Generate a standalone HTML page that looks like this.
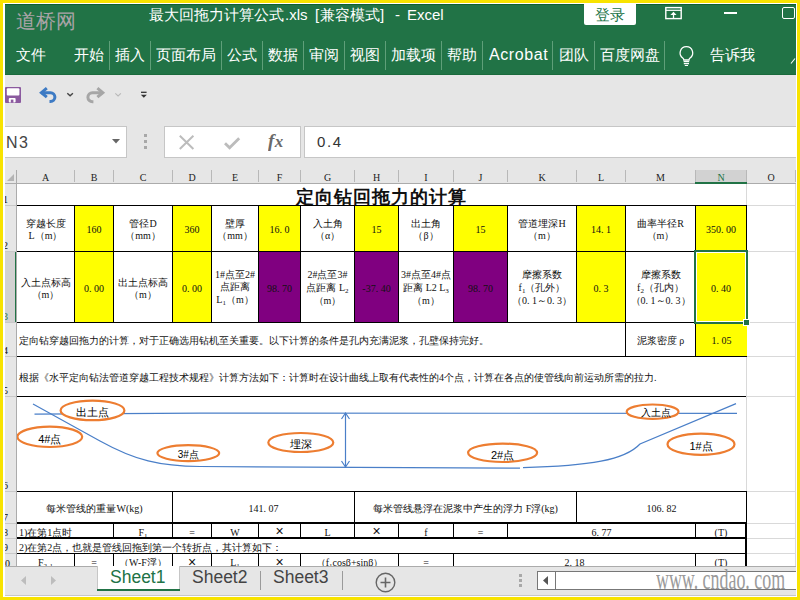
<!DOCTYPE html>
<html><head><meta charset="utf-8"><style>*{margin:0;padding:0}
html,body{width:800px;height:600px;overflow:hidden;background:#f8e300;position:relative}
div{position:absolute;overflow:hidden;white-space:nowrap}
.k{font-family:Liberation Sans,sans-serif;-webkit-text-stroke:0.4px currentColor}
.in{display:block}
.ln{display:block}
.sb{padding:1px 0 1px}
.p{padding-right:2.5px}
.x{font:14px/10px Liberation Sans,sans-serif}
sub{font-size:7px;vertical-align:-2px;line-height:0}
b{font-weight:bold}
body.cjk .k{font-size:inherit!important;letter-spacing:0!important;padding-left:0!important;margin-right:0!important;-webkit-text-stroke-width:0!important}
body.cjk b .k{font-size:18px!important;letter-spacing:1px!important}
</style></head><body>
<div style="left:3px;top:3px;width:794px;height:594px;background:#fff"></div>
<div style="left:5px;top:4px;width:791px;height:71px;background:#217346;"></div>
<div style="left:5px;top:4px;width:791px;height:1px;background:#0f5f33;"></div>
<div style="left:5px;top:74px;width:791px;height:1px;background:#1a6a3c;"></div>
<div style="left:16px;top:9px;width:60px;height:24px;color:#a9a3a6;font:20px/24px Liberation Sans,sans-serif;"><span class="k" style="font-size:24px;letter-spacing:1px;padding-left:0.5px;margin-right:-0.5px;-webkit-text-stroke-width:0.53px">道桥网</span></div>
<div style="left:149px;top:5px;width:150px;height:20px;color:#fff;font:15px/20px Liberation Sans,sans-serif;white-space:pre;"><span class="k" style="font-size:18px;letter-spacing:1px;padding-left:0.5px;margin-right:-0.5px;-webkit-text-stroke-width:0.4px">最大回拖力计算公式</span></div>
<div style="left:285px;top:5px;width:150px;height:20px;color:#fff;font:15px/20px Liberation Sans,sans-serif;white-space:pre;">.xls</div>
<div style="left:315px;top:5px;width:150px;height:20px;color:#fff;font:15px/20px Liberation Sans,sans-serif;white-space:pre;">[</div>
<div style="left:320px;top:5px;width:150px;height:20px;color:#fff;font:15px/20px Liberation Sans,sans-serif;white-space:pre;"><span class="k" style="font-size:18px;letter-spacing:1px;padding-left:0.5px;margin-right:-0.5px;-webkit-text-stroke-width:0.4px">兼容模式</span></div>
<div style="left:380px;top:5px;width:150px;height:20px;color:#fff;font:15px/20px Liberation Sans,sans-serif;white-space:pre;">]</div>
<div style="left:395px;top:5px;width:150px;height:20px;color:#fff;font:15px/20px Liberation Sans,sans-serif;white-space:pre;">-</div>
<div style="left:407px;top:5px;width:150px;height:20px;color:#fff;font:15px/20px Liberation Sans,sans-serif;white-space:pre;">Excel</div>
<div style="left:584px;top:4px;width:52px;height:21px;background:#fff;color:#217346;font:15px/21px Liberation Sans,sans-serif;text-align:center;border-radius:0 0 2px 2px;"><span class="k" style="font-size:18px;letter-spacing:1px;padding-left:0.5px;margin-right:-0.5px;-webkit-text-stroke-width:0.4px">登录</span></div>
<svg style="position:absolute;left:660px;top:0px" width="30" height="25" viewBox="660 0 30 25"><rect x="665.8" y="7.6" width="15.4" height="11" stroke="#fff" stroke-width="1.4" fill="none"/><path d="M665.8 10.3h15.4" stroke="#fff" stroke-width="1.2"/><path d="M673.5 18.2V13.5" stroke="#fff" stroke-width="1.3"/><path d="M670.4 15L673.5 11.8 676.6 15z" fill="#fff"/></svg>
<div style="left:724px;top:12px;width:13px;height:1.5px;background:#fff;"></div>
<div style="left:782px;top:7px;width:13px;height:12px;border:1.5px solid #fff;box-sizing:border-box;border-radius:2px;"></div>
<div style="left:16px;top:45px;width:120px;height:20px;color:#fff;font:15px/20px Liberation Sans,sans-serif;white-space:pre;"><span class="k" style="font-size:18px;letter-spacing:1px;padding-left:0.5px;margin-right:-0.5px;-webkit-text-stroke-width:0.4px">文件</span></div>
<div style="left:74px;top:45px;width:120px;height:20px;color:#fff;font:15px/20px Liberation Sans,sans-serif;white-space:pre;"><span class="k" style="font-size:18px;letter-spacing:1px;padding-left:0.5px;margin-right:-0.5px;-webkit-text-stroke-width:0.4px">开始</span></div>
<div style="left:115px;top:45px;width:120px;height:20px;color:#fff;font:15px/20px Liberation Sans,sans-serif;white-space:pre;"><span class="k" style="font-size:18px;letter-spacing:1px;padding-left:0.5px;margin-right:-0.5px;-webkit-text-stroke-width:0.4px">插入</span></div>
<div style="left:156px;top:45px;width:120px;height:20px;color:#fff;font:15px/20px Liberation Sans,sans-serif;white-space:pre;"><span class="k" style="font-size:18px;letter-spacing:1px;padding-left:0.5px;margin-right:-0.5px;-webkit-text-stroke-width:0.4px">页面布局</span></div>
<div style="left:227px;top:45px;width:120px;height:20px;color:#fff;font:15px/20px Liberation Sans,sans-serif;white-space:pre;"><span class="k" style="font-size:18px;letter-spacing:1px;padding-left:0.5px;margin-right:-0.5px;-webkit-text-stroke-width:0.4px">公式</span></div>
<div style="left:268px;top:45px;width:120px;height:20px;color:#fff;font:15px/20px Liberation Sans,sans-serif;white-space:pre;"><span class="k" style="font-size:18px;letter-spacing:1px;padding-left:0.5px;margin-right:-0.5px;-webkit-text-stroke-width:0.4px">数据</span></div>
<div style="left:309px;top:45px;width:120px;height:20px;color:#fff;font:15px/20px Liberation Sans,sans-serif;white-space:pre;"><span class="k" style="font-size:18px;letter-spacing:1px;padding-left:0.5px;margin-right:-0.5px;-webkit-text-stroke-width:0.4px">审阅</span></div>
<div style="left:350px;top:45px;width:120px;height:20px;color:#fff;font:15px/20px Liberation Sans,sans-serif;white-space:pre;"><span class="k" style="font-size:18px;letter-spacing:1px;padding-left:0.5px;margin-right:-0.5px;-webkit-text-stroke-width:0.4px">视图</span></div>
<div style="left:391px;top:45px;width:120px;height:20px;color:#fff;font:15px/20px Liberation Sans,sans-serif;white-space:pre;"><span class="k" style="font-size:18px;letter-spacing:1px;padding-left:0.5px;margin-right:-0.5px;-webkit-text-stroke-width:0.4px">加载项</span></div>
<div style="left:447px;top:45px;width:120px;height:20px;color:#fff;font:15px/20px Liberation Sans,sans-serif;white-space:pre;"><span class="k" style="font-size:18px;letter-spacing:1px;padding-left:0.5px;margin-right:-0.5px;-webkit-text-stroke-width:0.4px">帮助</span></div>
<div style="left:489px;top:45px;width:120px;height:20px;color:#fff;font:16px/20px Liberation Sans,sans-serif;letter-spacing:0.6px;white-space:pre;">Acrobat</div>
<div style="left:559px;top:45px;width:120px;height:20px;color:#fff;font:15px/20px Liberation Sans,sans-serif;white-space:pre;"><span class="k" style="font-size:18px;letter-spacing:1px;padding-left:0.5px;margin-right:-0.5px;-webkit-text-stroke-width:0.4px">团队</span></div>
<div style="left:600px;top:45px;width:120px;height:20px;color:#fff;font:15px/20px Liberation Sans,sans-serif;white-space:pre;"><span class="k" style="font-size:18px;letter-spacing:1px;padding-left:0.5px;margin-right:-0.5px;-webkit-text-stroke-width:0.4px">百度网盘</span></div>
<div style="left:710px;top:45px;width:120px;height:20px;color:#fff;font:15px/20px Liberation Sans,sans-serif;white-space:pre;"><span class="k" style="font-size:18px;letter-spacing:1px;padding-left:0.5px;margin-right:-0.5px;-webkit-text-stroke-width:0.4px">告诉我</span></div>
<div style="left:109px;top:41px;width:1px;height:29px;background:#5f9f79;"></div>
<div style="left:150px;top:41px;width:1px;height:29px;background:#5f9f79;"></div>
<div style="left:221px;top:41px;width:1px;height:29px;background:#5f9f79;"></div>
<div style="left:262px;top:41px;width:1px;height:29px;background:#5f9f79;"></div>
<div style="left:303px;top:41px;width:1px;height:29px;background:#5f9f79;"></div>
<div style="left:344px;top:41px;width:1px;height:29px;background:#5f9f79;"></div>
<div style="left:385px;top:41px;width:1px;height:29px;background:#5f9f79;"></div>
<div style="left:441px;top:41px;width:1px;height:29px;background:#5f9f79;"></div>
<div style="left:482px;top:41px;width:1px;height:29px;background:#5f9f79;"></div>
<div style="left:552px;top:41px;width:1px;height:29px;background:#5f9f79;"></div>
<div style="left:594px;top:41px;width:1px;height:29px;background:#5f9f79;"></div>
<div style="left:664px;top:41px;width:1px;height:29px;background:#5f9f79;"></div>
<svg style="position:absolute;left:670px;top:40px" width="30" height="30" viewBox="670 40 30 30"><path d="M686.4 46.6a6.3 6.3 0 0 0-3.4 11.6c.6.5.8 1.1.8 1.8h5.2c0-.7.2-1.3.8-1.8a6.3 6.3 0 0 0-3.4-11.6z" stroke="#fff" stroke-width="1.3" fill="none"/><path d="M683.6 61.6h5.6M683.8 63.6h5.2M684.8 65.5h3.2" stroke="#fff" stroke-width="1.2"/></svg>
<svg style="position:absolute;left:790px;top:55px" width="6" height="10"><path d="M1 8.5L5 3.5" stroke="#fff" stroke-width="1.1"/></svg>
<div style="left:5px;top:75px;width:791px;height:108px;background:#e6e6e6;"></div>
<svg style="position:absolute;left:0;top:80px" width="160" height="30" viewBox="0 80 160 30"><rect x="5" y="87" width="16" height="16" rx="1" fill="#8b5a9f"/><rect x="6.8" y="88.2" width="12.6" height="7.4" rx="1" fill="#fff"/><rect x="8.8" y="98" width="6.8" height="4.6" rx="1" fill="#fff"/><rect x="10.8" y="99.6" width="2.6" height="3.2" fill="#8b5a9f"/><path d="M46.8 88.2L41.4 92.7 46.8 97.2" stroke="#3e7bc4" stroke-width="3" fill="none"/><path d="M41.5 92.7H50.5A4.4 4.4 0 0 1 50.5 101.5H49.5" stroke="#3e7bc4" stroke-width="3" fill="none"/><path d="M67.3 93.2l2.8 2.6 2.8-2.6" stroke="#444" stroke-width="1.4" fill="none"/><path d="M97.4 88.2L102.8 92.7 97.4 97.2" stroke="#a6a6a6" stroke-width="3" fill="none"/><path d="M102.6 92.7H92.4A4.5 4.5 0 0 0 92.4 101.7H93.4" stroke="#a6a6a6" stroke-width="3" fill="none"/><path d="M115.3 93.4l2.8 2.5 2.8-2.5" stroke="#b8b8b8" stroke-width="1.1" fill="none"/><path d="M141 92.3h5.6" stroke="#333" stroke-width="1.3"/><path d="M140.8 94.8h6l-3 3z" fill="#333"/></svg>
<div style="left:5px;top:126px;width:122px;height:32px;background:#fff;border:1px solid #c6c6c6;border-left:none;box-sizing:border-box;"></div>
<div style="left:6px;top:133px;width:60px;height:20px;color:#444;font:16px/20px Liberation Sans,sans-serif;letter-spacing:1.5px;">N3</div>
<svg style="position:absolute;left:112px;top:139px" width="8" height="5"><path d="M0 0h8L4 4.5z" fill="#666"/></svg>
<div style="left:144px;top:134px;width:3px;height:3px;background:#a8a8a8;"></div>
<div style="left:144px;top:140px;width:3px;height:3px;background:#a8a8a8;"></div>
<div style="left:144px;top:146px;width:3px;height:3px;background:#a8a8a8;"></div>
<div style="left:164px;top:126px;width:137px;height:32px;background:#fff;border:1px solid #c6c6c6;box-sizing:border-box;"></div>
<svg style="position:absolute;left:177px;top:133px" width="20" height="18"><path d="M2.8 2.8l13.6 13.2M16.4 2.8L2.8 16" stroke="#bcbcbc" stroke-width="2" fill="none"/></svg>
<svg style="position:absolute;left:222px;top:133px" width="20" height="18"><path d="M3 10.2l4.6 4.6 9.6-9.6" stroke="#bcbcbc" stroke-width="2.8" fill="none"/></svg>
<div style="left:268px;top:129px;width:26px;height:24px;color:#6a6a6a;font:italic bold 19px/24px Liberation Serif,serif;">f<span style="font-size:17px;margin-left:0.5px">x</span></div>
<div style="left:304px;top:126px;width:492px;height:32px;background:#fff;border:1px solid #c6c6c6;border-right:none;box-sizing:border-box;"></div>
<div style="left:317px;top:132px;width:60px;height:20px;color:#333;font:15px/20px Liberation Sans,sans-serif;letter-spacing:1.6px;">0.4</div>
<div style="left:5px;top:170px;width:791px;height:13px;background:#e6e6e6;"></div>
<div style="left:5px;top:183px;width:791px;height:1px;background:#ababab;"></div>
<div style="left:16px;top:170px;width:1px;height:14px;background:#ababab;"></div>
<svg style="position:absolute;left:6px;top:173px" width="9" height="9"><path d="M8 1v7H1z" fill="#b4b4b4"/></svg>
<div style="left:696px;top:170px;width:50px;height:13px;background:#d2d2d2;"></div>
<div style="left:695px;top:182px;width:52px;height:2px;background:#217346;"></div>
<div style="left:74px;top:170px;width:1px;height:12px;background:#b8b8b8;"></div>
<div style="left:17px;top:172px;width:57px;height:12px;color:#222;font:10px/12px Liberation Serif,serif;text-align:center;">A</div>
<div style="left:113px;top:170px;width:1px;height:12px;background:#b8b8b8;"></div>
<div style="left:75px;top:172px;width:38px;height:12px;color:#222;font:10px/12px Liberation Serif,serif;text-align:center;">B</div>
<div style="left:172px;top:170px;width:1px;height:12px;background:#b8b8b8;"></div>
<div style="left:114px;top:172px;width:58px;height:12px;color:#222;font:10px/12px Liberation Serif,serif;text-align:center;">C</div>
<div style="left:211px;top:170px;width:1px;height:12px;background:#b8b8b8;"></div>
<div style="left:173px;top:172px;width:38px;height:12px;color:#222;font:10px/12px Liberation Serif,serif;text-align:center;">D</div>
<div style="left:258px;top:170px;width:1px;height:12px;background:#b8b8b8;"></div>
<div style="left:212px;top:172px;width:46px;height:12px;color:#222;font:10px/12px Liberation Serif,serif;text-align:center;">E</div>
<div style="left:300px;top:170px;width:1px;height:12px;background:#b8b8b8;"></div>
<div style="left:259px;top:172px;width:41px;height:12px;color:#222;font:10px/12px Liberation Serif,serif;text-align:center;">F</div>
<div style="left:354px;top:170px;width:1px;height:12px;background:#b8b8b8;"></div>
<div style="left:301px;top:172px;width:53px;height:12px;color:#222;font:10px/12px Liberation Serif,serif;text-align:center;">G</div>
<div style="left:398px;top:170px;width:1px;height:12px;background:#b8b8b8;"></div>
<div style="left:355px;top:172px;width:43px;height:12px;color:#222;font:10px/12px Liberation Serif,serif;text-align:center;">H</div>
<div style="left:453px;top:170px;width:1px;height:12px;background:#b8b8b8;"></div>
<div style="left:399px;top:172px;width:54px;height:12px;color:#222;font:10px/12px Liberation Serif,serif;text-align:center;">I</div>
<div style="left:507px;top:170px;width:1px;height:12px;background:#b8b8b8;"></div>
<div style="left:454px;top:172px;width:53px;height:12px;color:#222;font:10px/12px Liberation Serif,serif;text-align:center;">J</div>
<div style="left:576px;top:170px;width:1px;height:12px;background:#b8b8b8;"></div>
<div style="left:508px;top:172px;width:68px;height:12px;color:#222;font:10px/12px Liberation Serif,serif;text-align:center;">K</div>
<div style="left:625px;top:170px;width:1px;height:12px;background:#b8b8b8;"></div>
<div style="left:577px;top:172px;width:48px;height:12px;color:#222;font:10px/12px Liberation Serif,serif;text-align:center;">L</div>
<div style="left:695px;top:170px;width:1px;height:12px;background:#b8b8b8;"></div>
<div style="left:626px;top:172px;width:69px;height:12px;color:#222;font:10px/12px Liberation Serif,serif;text-align:center;">M</div>
<div style="left:746px;top:170px;width:1px;height:12px;background:#b8b8b8;"></div>
<div style="left:696px;top:172px;width:50px;height:12px;color:#217346;font:10px/12px Liberation Serif,serif;text-align:center;">N</div>
<div style="left:795px;top:170px;width:1px;height:12px;background:#b8b8b8;"></div>
<div style="left:747px;top:172px;width:48px;height:12px;color:#222;font:10px/12px Liberation Serif,serif;text-align:center;">O</div>
<div style="left:5px;top:184px;width:11px;height:382px;background:#e6e6e6;"></div>
<div style="left:5px;top:252px;width:11px;height:71px;background:#d2d2d2;"></div>
<div style="left:15px;top:252px;width:2px;height:71px;background:#217346;"></div>
<div style="left:5px;top:205px;width:11px;height:1px;background:#c8c8c8;"></div>
<div style="left:5px;top:194px;width:11px;height:11px;color:#111;font:10px/11px Liberation Serif,serif;text-indent:-2px;">1</div>
<div style="left:5px;top:251px;width:11px;height:1px;background:#c8c8c8;"></div>
<div style="left:5px;top:240px;width:11px;height:11px;color:#111;font:10px/11px Liberation Serif,serif;text-indent:-2px;">2</div>
<div style="left:5px;top:322px;width:11px;height:1px;background:#c8c8c8;"></div>
<div style="left:5px;top:311px;width:11px;height:11px;color:#217346;font:10px/11px Liberation Serif,serif;text-indent:-2px;">3</div>
<div style="left:5px;top:356px;width:11px;height:1px;background:#c8c8c8;"></div>
<div style="left:5px;top:345px;width:11px;height:11px;color:#111;font:10px/11px Liberation Serif,serif;text-indent:-2px;">4</div>
<div style="left:5px;top:396px;width:11px;height:1px;background:#c8c8c8;"></div>
<div style="left:5px;top:385px;width:11px;height:11px;color:#111;font:10px/11px Liberation Serif,serif;text-indent:-2px;">5</div>
<div style="left:5px;top:491px;width:11px;height:1px;background:#c8c8c8;"></div>
<div style="left:5px;top:480px;width:11px;height:11px;color:#111;font:10px/11px Liberation Serif,serif;text-indent:-2px;">6</div>
<div style="left:5px;top:523px;width:11px;height:1px;background:#c8c8c8;"></div>
<div style="left:5px;top:512px;width:11px;height:11px;color:#111;font:10px/11px Liberation Serif,serif;text-indent:-2px;">7</div>
<div style="left:5px;top:538px;width:11px;height:1px;background:#c8c8c8;"></div>
<div style="left:5px;top:527px;width:11px;height:11px;color:#111;font:10px/11px Liberation Serif,serif;text-indent:-2px;">8</div>
<div style="left:5px;top:553px;width:11px;height:1px;background:#c8c8c8;"></div>
<div style="left:5px;top:542px;width:11px;height:11px;color:#111;font:10px/11px Liberation Serif,serif;text-indent:-2px;">9</div>
<div style="left:5px;top:569px;width:11px;height:1px;background:#c8c8c8;"></div>
<div style="left:5px;top:558px;width:11px;height:11px;color:#111;font:10px/11px Liberation Serif,serif;text-indent:-5px;">10</div>
<div style="left:17px;top:184px;width:779px;height:382px;background:#fff;"></div>
<div style="left:747px;top:205px;width:49px;height:1px;background:#d9d9d9;"></div>
<div style="left:747px;top:251px;width:49px;height:1px;background:#d9d9d9;"></div>
<div style="left:747px;top:322px;width:49px;height:1px;background:#d9d9d9;"></div>
<div style="left:747px;top:356px;width:49px;height:1px;background:#d9d9d9;"></div>
<div style="left:747px;top:396px;width:49px;height:1px;background:#d9d9d9;"></div>
<div style="left:747px;top:491px;width:49px;height:1px;background:#d9d9d9;"></div>
<div style="left:747px;top:523px;width:49px;height:1px;background:#d9d9d9;"></div>
<div style="left:747px;top:538px;width:49px;height:1px;background:#d9d9d9;"></div>
<div style="left:747px;top:553px;width:49px;height:1px;background:#d9d9d9;"></div>
<div style="left:747px;top:569px;width:49px;height:1px;background:#d9d9d9;"></div>
<div style="left:795px;top:184px;width:1px;height:382px;background:#d9d9d9;"></div>
<div style="left:17px;top:184px;width:729px;height:21px;display:flex;align-items:center;justify-content:center;text-align:center;color:#111;font:10px/12px Liberation Serif,serif;font-size:22px;line-height:20px;padding-top:3px;box-sizing:border-box;"><span class="in"><span class="ln"><b><span class="k" style="font-size:22px;letter-spacing:2px;padding-left:1.0px;margin-right:-1.0px;-webkit-text-stroke-width:1.5px">定向钻回拖力的计算</span></b></span></span></div>
<div style="left:17px;top:206px;width:57px;height:45px;display:flex;align-items:center;justify-content:center;text-align:center;color:#111;font:10px/12px Liberation Serif,serif;padding-top:3px;box-sizing:border-box;"><span class="in"><span class="ln"><span class="k" style="font-size:12px;letter-spacing:1px;padding-left:0.5px;margin-right:-0.5px;-webkit-text-stroke-width:0.26px">穿越长度</span></span><span class="ln">L<span class="k" style="font-size:12px;letter-spacing:1px;padding-left:0.5px;margin-right:-0.5px;-webkit-text-stroke-width:0.26px">（</span>m<span class="k" style="font-size:12px;letter-spacing:1px;padding-left:0.5px;margin-right:-0.5px;-webkit-text-stroke-width:0.26px">）</span></span></span></div>
<div style="left:75px;top:206px;width:38px;height:45px;background:#ffff00;display:flex;align-items:center;justify-content:center;text-align:center;color:#111;font:10px/12px Liberation Serif,serif;padding-top:3px;box-sizing:border-box;"><span class="in"><span class="ln">160</span></span></div>
<div style="left:114px;top:206px;width:58px;height:45px;display:flex;align-items:center;justify-content:center;text-align:center;color:#111;font:10px/12px Liberation Serif,serif;padding-top:3px;box-sizing:border-box;"><span class="in"><span class="ln"><span class="k" style="font-size:12px;letter-spacing:1px;padding-left:0.5px;margin-right:-0.5px;-webkit-text-stroke-width:0.26px">管径</span>D</span><span class="ln"><span class="k" style="font-size:12px;letter-spacing:1px;padding-left:0.5px;margin-right:-0.5px;-webkit-text-stroke-width:0.26px">（</span>mm<span class="k" style="font-size:12px;letter-spacing:1px;padding-left:0.5px;margin-right:-0.5px;-webkit-text-stroke-width:0.26px">）</span></span></span></div>
<div style="left:173px;top:206px;width:38px;height:45px;background:#ffff00;display:flex;align-items:center;justify-content:center;text-align:center;color:#111;font:10px/12px Liberation Serif,serif;padding-top:3px;box-sizing:border-box;"><span class="in"><span class="ln">360</span></span></div>
<div style="left:212px;top:206px;width:46px;height:45px;display:flex;align-items:center;justify-content:center;text-align:center;color:#111;font:10px/12px Liberation Serif,serif;padding-top:3px;box-sizing:border-box;"><span class="in"><span class="ln"><span class="k" style="font-size:12px;letter-spacing:1px;padding-left:0.5px;margin-right:-0.5px;-webkit-text-stroke-width:0.26px">壁厚</span></span><span class="ln"><span class="k" style="font-size:12px;letter-spacing:1px;padding-left:0.5px;margin-right:-0.5px;-webkit-text-stroke-width:0.26px">（</span>mm<span class="k" style="font-size:12px;letter-spacing:1px;padding-left:0.5px;margin-right:-0.5px;-webkit-text-stroke-width:0.26px">）</span></span></span></div>
<div style="left:259px;top:206px;width:41px;height:45px;background:#ffff00;display:flex;align-items:center;justify-content:center;text-align:center;color:#111;font:10px/12px Liberation Serif,serif;padding-top:3px;box-sizing:border-box;"><span class="in"><span class="ln">16<span class="p">.</span>0</span></span></div>
<div style="left:301px;top:206px;width:53px;height:45px;display:flex;align-items:center;justify-content:center;text-align:center;color:#111;font:10px/12px Liberation Serif,serif;padding-top:3px;box-sizing:border-box;"><span class="in"><span class="ln"><span class="k" style="font-size:12px;letter-spacing:1px;padding-left:0.5px;margin-right:-0.5px;-webkit-text-stroke-width:0.26px">入土角</span></span><span class="ln"><span class="k" style="font-size:12px;letter-spacing:1px;padding-left:0.5px;margin-right:-0.5px;-webkit-text-stroke-width:0.26px">（</span>α<span class="k" style="font-size:12px;letter-spacing:1px;padding-left:0.5px;margin-right:-0.5px;-webkit-text-stroke-width:0.26px">）</span></span></span></div>
<div style="left:355px;top:206px;width:43px;height:45px;background:#ffff00;display:flex;align-items:center;justify-content:center;text-align:center;color:#111;font:10px/12px Liberation Serif,serif;padding-top:3px;box-sizing:border-box;"><span class="in"><span class="ln">15</span></span></div>
<div style="left:399px;top:206px;width:54px;height:45px;display:flex;align-items:center;justify-content:center;text-align:center;color:#111;font:10px/12px Liberation Serif,serif;padding-top:3px;box-sizing:border-box;"><span class="in"><span class="ln"><span class="k" style="font-size:12px;letter-spacing:1px;padding-left:0.5px;margin-right:-0.5px;-webkit-text-stroke-width:0.26px">出土角</span></span><span class="ln"><span class="k" style="font-size:12px;letter-spacing:1px;padding-left:0.5px;margin-right:-0.5px;-webkit-text-stroke-width:0.26px">（</span>β<span class="k" style="font-size:12px;letter-spacing:1px;padding-left:0.5px;margin-right:-0.5px;-webkit-text-stroke-width:0.26px">）</span></span></span></div>
<div style="left:454px;top:206px;width:53px;height:45px;background:#ffff00;display:flex;align-items:center;justify-content:center;text-align:center;color:#111;font:10px/12px Liberation Serif,serif;padding-top:3px;box-sizing:border-box;"><span class="in"><span class="ln">15</span></span></div>
<div style="left:508px;top:206px;width:68px;height:45px;display:flex;align-items:center;justify-content:center;text-align:center;color:#111;font:10px/12px Liberation Serif,serif;padding-top:3px;box-sizing:border-box;"><span class="in"><span class="ln"><span class="k" style="font-size:12px;letter-spacing:1px;padding-left:0.5px;margin-right:-0.5px;-webkit-text-stroke-width:0.26px">管道埋深</span>H</span><span class="ln"><span class="k" style="font-size:12px;letter-spacing:1px;padding-left:0.5px;margin-right:-0.5px;-webkit-text-stroke-width:0.26px">（</span>m<span class="k" style="font-size:12px;letter-spacing:1px;padding-left:0.5px;margin-right:-0.5px;-webkit-text-stroke-width:0.26px">）</span></span></span></div>
<div style="left:577px;top:206px;width:48px;height:45px;background:#ffff00;display:flex;align-items:center;justify-content:center;text-align:center;color:#111;font:10px/12px Liberation Serif,serif;padding-top:3px;box-sizing:border-box;"><span class="in"><span class="ln">14<span class="p">.</span>1</span></span></div>
<div style="left:626px;top:206px;width:69px;height:45px;display:flex;align-items:center;justify-content:center;text-align:center;color:#111;font:10px/12px Liberation Serif,serif;padding-top:3px;box-sizing:border-box;"><span class="in"><span class="ln"><span class="k" style="font-size:12px;letter-spacing:1px;padding-left:0.5px;margin-right:-0.5px;-webkit-text-stroke-width:0.26px">曲率半径</span>R</span><span class="ln"><span class="k" style="font-size:12px;letter-spacing:1px;padding-left:0.5px;margin-right:-0.5px;-webkit-text-stroke-width:0.26px">（</span>m<span class="k" style="font-size:12px;letter-spacing:1px;padding-left:0.5px;margin-right:-0.5px;-webkit-text-stroke-width:0.26px">）</span></span></span></div>
<div style="left:696px;top:206px;width:50px;height:45px;background:#ffff00;display:flex;align-items:center;justify-content:center;text-align:center;color:#111;font:10px/12px Liberation Serif,serif;padding-top:3px;box-sizing:border-box;"><span class="in"><span class="ln">350<span class="p">.</span>00</span></span></div>
<div style="left:17px;top:252px;width:57px;height:70px;display:flex;align-items:center;justify-content:center;text-align:center;color:#111;font:10px/12px Liberation Serif,serif;padding-top:3px;box-sizing:border-box;"><span class="in"><span class="ln"><span class="k" style="font-size:12px;letter-spacing:1px;padding-left:0.5px;margin-right:-0.5px;-webkit-text-stroke-width:0.26px">入土点标高</span></span><span class="ln"><span class="k" style="font-size:12px;letter-spacing:1px;padding-left:0.5px;margin-right:-0.5px;-webkit-text-stroke-width:0.26px">（</span>m<span class="k" style="font-size:12px;letter-spacing:1px;padding-left:0.5px;margin-right:-0.5px;-webkit-text-stroke-width:0.26px">）</span></span></span></div>
<div style="left:75px;top:252px;width:38px;height:70px;background:#ffff00;display:flex;align-items:center;justify-content:center;text-align:center;color:#111;font:10px/12px Liberation Serif,serif;padding-top:3px;box-sizing:border-box;"><span class="in"><span class="ln">0<span class="p">.</span>00</span></span></div>
<div style="left:114px;top:252px;width:58px;height:70px;display:flex;align-items:center;justify-content:center;text-align:center;color:#111;font:10px/12px Liberation Serif,serif;padding-top:3px;box-sizing:border-box;"><span class="in"><span class="ln"><span class="k" style="font-size:12px;letter-spacing:1px;padding-left:0.5px;margin-right:-0.5px;-webkit-text-stroke-width:0.26px">出土点标高</span></span><span class="ln"><span class="k" style="font-size:12px;letter-spacing:1px;padding-left:0.5px;margin-right:-0.5px;-webkit-text-stroke-width:0.26px">（</span>m<span class="k" style="font-size:12px;letter-spacing:1px;padding-left:0.5px;margin-right:-0.5px;-webkit-text-stroke-width:0.26px">）</span></span></span></div>
<div style="left:173px;top:252px;width:38px;height:70px;background:#ffff00;display:flex;align-items:center;justify-content:center;text-align:center;color:#111;font:10px/12px Liberation Serif,serif;padding-top:3px;box-sizing:border-box;"><span class="in"><span class="ln">0<span class="p">.</span>00</span></span></div>
<div style="left:212px;top:252px;width:46px;height:70px;display:flex;align-items:center;justify-content:center;text-align:center;color:#111;font:10px/12px Liberation Serif,serif;padding-top:1px;box-sizing:border-box;"><span class="in"><span class="ln">1#<span class="k" style="font-size:12px;letter-spacing:1px;padding-left:0.5px;margin-right:-0.5px;-webkit-text-stroke-width:0.26px">点至</span>2#</span><span class="ln"><span class="k" style="font-size:12px;letter-spacing:1px;padding-left:0.5px;margin-right:-0.5px;-webkit-text-stroke-width:0.26px">点距离</span></span><span class="ln sb">L<sub>1</sub><span class="k" style="font-size:12px;letter-spacing:1px;padding-left:0.5px;margin-right:-0.5px;-webkit-text-stroke-width:0.26px">（</span>m<span class="k" style="font-size:12px;letter-spacing:1px;padding-left:0.5px;margin-right:-0.5px;-webkit-text-stroke-width:0.26px">）</span></span></span></div>
<div style="left:259px;top:252px;width:41px;height:70px;background:#800080;display:flex;align-items:center;justify-content:center;text-align:center;color:#111;font:10px/12px Liberation Serif,serif;padding-top:3px;box-sizing:border-box;"><span class="in"><span class="ln">98<span class="p">.</span>70</span></span></div>
<div style="left:301px;top:252px;width:53px;height:70px;display:flex;align-items:center;justify-content:center;text-align:center;color:#111;font:10px/12px Liberation Serif,serif;padding-top:1px;box-sizing:border-box;"><span class="in"><span class="ln">2#<span class="k" style="font-size:12px;letter-spacing:1px;padding-left:0.5px;margin-right:-0.5px;-webkit-text-stroke-width:0.26px">点至</span>3#</span><span class="ln sb"><span class="k" style="font-size:12px;letter-spacing:1px;padding-left:0.5px;margin-right:-0.5px;-webkit-text-stroke-width:0.26px">点距离</span> L<sub>2</sub></span><span class="ln"><span class="k" style="font-size:12px;letter-spacing:1px;padding-left:0.5px;margin-right:-0.5px;-webkit-text-stroke-width:0.26px">（</span>m<span class="k" style="font-size:12px;letter-spacing:1px;padding-left:0.5px;margin-right:-0.5px;-webkit-text-stroke-width:0.26px">）</span></span></span></div>
<div style="left:355px;top:252px;width:43px;height:70px;background:#800080;display:flex;align-items:center;justify-content:center;text-align:center;color:#111;font:10px/12px Liberation Serif,serif;padding-top:3px;box-sizing:border-box;"><span class="in"><span class="ln">-37<span class="p">.</span>40</span></span></div>
<div style="left:399px;top:252px;width:54px;height:70px;display:flex;align-items:center;justify-content:center;text-align:center;color:#111;font:10px/12px Liberation Serif,serif;padding-top:1px;box-sizing:border-box;"><span class="in"><span class="ln">3#<span class="k" style="font-size:12px;letter-spacing:1px;padding-left:0.5px;margin-right:-0.5px;-webkit-text-stroke-width:0.26px">点至</span>4#<span class="k" style="font-size:12px;letter-spacing:1px;padding-left:0.5px;margin-right:-0.5px;-webkit-text-stroke-width:0.26px">点</span></span><span class="ln sb"><span class="k" style="font-size:12px;letter-spacing:1px;padding-left:0.5px;margin-right:-0.5px;-webkit-text-stroke-width:0.26px">距离</span> L2 L<sub>3</sub></span><span class="ln"><span class="k" style="font-size:12px;letter-spacing:1px;padding-left:0.5px;margin-right:-0.5px;-webkit-text-stroke-width:0.26px">（</span>m<span class="k" style="font-size:12px;letter-spacing:1px;padding-left:0.5px;margin-right:-0.5px;-webkit-text-stroke-width:0.26px">）</span></span></span></div>
<div style="left:454px;top:252px;width:53px;height:70px;background:#800080;display:flex;align-items:center;justify-content:center;text-align:center;color:#111;font:10px/12px Liberation Serif,serif;padding-top:3px;box-sizing:border-box;"><span class="in"><span class="ln">98<span class="p">.</span>70</span></span></div>
<div style="left:508px;top:252px;width:68px;height:70px;display:flex;align-items:center;justify-content:center;text-align:center;color:#111;font:10px/12px Liberation Serif,serif;padding-top:1px;box-sizing:border-box;"><span class="in"><span class="ln"><span class="k" style="font-size:12px;letter-spacing:1px;padding-left:0.5px;margin-right:-0.5px;-webkit-text-stroke-width:0.26px">摩擦系数</span></span><span class="ln sb">f<sub>1</sub><span class="k" style="font-size:12px;letter-spacing:1px;padding-left:0.5px;margin-right:-0.5px;-webkit-text-stroke-width:0.26px">（孔外）</span></span><span class="ln"><span class="k" style="font-size:12px;letter-spacing:1px;padding-left:0.5px;margin-right:-0.5px;-webkit-text-stroke-width:0.26px">（</span>0<span class="p">.</span>1<span class="k" style="font-size:12px;letter-spacing:1px;padding-left:0.5px;margin-right:-0.5px;-webkit-text-stroke-width:0.26px">～</span>0<span class="p">.</span>3<span class="k" style="font-size:12px;letter-spacing:1px;padding-left:0.5px;margin-right:-0.5px;-webkit-text-stroke-width:0.26px">）</span></span></span></div>
<div style="left:577px;top:252px;width:48px;height:70px;background:#ffff00;display:flex;align-items:center;justify-content:center;text-align:center;color:#111;font:10px/12px Liberation Serif,serif;padding-top:3px;box-sizing:border-box;"><span class="in"><span class="ln">0<span class="p">.</span>3</span></span></div>
<div style="left:626px;top:252px;width:69px;height:70px;display:flex;align-items:center;justify-content:center;text-align:center;color:#111;font:10px/12px Liberation Serif,serif;padding-top:1px;box-sizing:border-box;"><span class="in"><span class="ln"><span class="k" style="font-size:12px;letter-spacing:1px;padding-left:0.5px;margin-right:-0.5px;-webkit-text-stroke-width:0.26px">摩擦系数</span></span><span class="ln sb">f<sub>2</sub><span class="k" style="font-size:12px;letter-spacing:1px;padding-left:0.5px;margin-right:-0.5px;-webkit-text-stroke-width:0.26px">（孔内）</span></span><span class="ln"><span class="k" style="font-size:12px;letter-spacing:1px;padding-left:0.5px;margin-right:-0.5px;-webkit-text-stroke-width:0.26px">（</span>0<span class="p">.</span>1<span class="k" style="font-size:12px;letter-spacing:1px;padding-left:0.5px;margin-right:-0.5px;-webkit-text-stroke-width:0.26px">～</span>0<span class="p">.</span>3<span class="k" style="font-size:12px;letter-spacing:1px;padding-left:0.5px;margin-right:-0.5px;-webkit-text-stroke-width:0.26px">）</span></span></span></div>
<div style="left:696px;top:252px;width:50px;height:70px;background:#ffff00;display:flex;align-items:center;justify-content:center;text-align:center;color:#111;font:10px/12px Liberation Serif,serif;padding-top:3px;box-sizing:border-box;"><span class="in"><span class="ln">0<span class="p">.</span>40</span></span></div>
<div style="left:17px;top:323px;width:608px;height:33px;display:flex;align-items:center;justify-content:flex-start;text-align:left;color:#111;font:10px/12px Liberation Serif,serif;padding-left:2px;box-sizing:border-box;padding-top:3px;box-sizing:border-box;"><span class="in"><span class="ln"><span class="k" style="font-size:12px;letter-spacing:1px;padding-left:0.5px;margin-right:-0.5px;-webkit-text-stroke-width:0.26px">定向钻穿越回拖力的计算，对于正确选用钻机至关重要。以下计算的条件是孔内充满泥浆，孔壁保持完好。</span></span></span></div>
<div style="left:626px;top:323px;width:69px;height:33px;display:flex;align-items:center;justify-content:center;text-align:center;color:#111;font:10px/12px Liberation Serif,serif;padding-top:3px;box-sizing:border-box;"><span class="in"><span class="ln"><span class="k" style="font-size:12px;letter-spacing:1px;padding-left:0.5px;margin-right:-0.5px;-webkit-text-stroke-width:0.26px">泥浆密度</span> ρ</span></span></div>
<div style="left:696px;top:323px;width:50px;height:33px;background:#ffff00;display:flex;align-items:center;justify-content:center;text-align:center;color:#111;font:10px/12px Liberation Serif,serif;width:51px;padding-top:3px;box-sizing:border-box;"><span class="in"><span class="ln">1<span class="p">.</span>05</span></span></div>
<div style="left:17px;top:357px;width:729px;height:39px;display:flex;align-items:center;justify-content:flex-start;text-align:left;color:#111;font:10px/12px Liberation Serif,serif;padding-left:2px;box-sizing:border-box;padding-top:3px;box-sizing:border-box;"><span class="in"><span class="ln"><span class="k" style="font-size:12px;letter-spacing:1px;padding-left:0.5px;margin-right:-0.5px;-webkit-text-stroke-width:0.26px">根据《水平定向钻法管道穿越工程技术规程》计算方法如下：计算时在设计曲线上取有代表性的</span>4<span class="k" style="font-size:12px;letter-spacing:1px;padding-left:0.5px;margin-right:-0.5px;-webkit-text-stroke-width:0.26px">个点，计算在各点的使管线向前运动所需的拉力</span>.</span></span></div>
<div style="left:17px;top:492px;width:155px;height:31px;display:flex;align-items:center;justify-content:center;text-align:center;color:#111;font:10px/12px Liberation Serif,serif;padding-top:3px;box-sizing:border-box;"><span class="in"><span class="ln"><span class="k" style="font-size:12px;letter-spacing:1px;padding-left:0.5px;margin-right:-0.5px;-webkit-text-stroke-width:0.26px">每米管线的重量</span>W(kg)</span></span></div>
<div style="left:173px;top:492px;width:181px;height:31px;display:flex;align-items:center;justify-content:center;text-align:center;color:#111;font:10px/12px Liberation Serif,serif;padding-top:3px;box-sizing:border-box;"><span class="in"><span class="ln">141<span class="p">.</span>07</span></span></div>
<div style="left:355px;top:492px;width:221px;height:31px;display:flex;align-items:center;justify-content:center;text-align:center;color:#111;font:10px/12px Liberation Serif,serif;padding-top:3px;box-sizing:border-box;"><span class="in"><span class="ln"><span class="k" style="font-size:12px;letter-spacing:1px;padding-left:0.5px;margin-right:-0.5px;-webkit-text-stroke-width:0.26px">每米管线悬浮在泥浆中产生的浮力</span> F<span class="k" style="font-size:12px;letter-spacing:1px;padding-left:0.5px;margin-right:-0.5px;-webkit-text-stroke-width:0.26px">浮</span>(kg)</span></span></div>
<div style="left:577px;top:492px;width:169px;height:31px;display:flex;align-items:center;justify-content:center;text-align:center;color:#111;font:10px/12px Liberation Serif,serif;padding-top:3px;box-sizing:border-box;"><span class="in"><span class="ln">106<span class="p">.</span>82</span></span></div>
<div style="left:17px;top:524px;width:96px;height:14px;display:flex;align-items:center;justify-content:flex-start;text-align:left;color:#111;font:10px/12px Liberation Serif,serif;padding-left:2px;box-sizing:border-box;padding-top:3px;box-sizing:border-box;"><span class="in"><span class="ln">1)<span class="k" style="font-size:12px;letter-spacing:1px;padding-left:0.5px;margin-right:-0.5px;-webkit-text-stroke-width:0.26px">在第</span>1<span class="k" style="font-size:12px;letter-spacing:1px;padding-left:0.5px;margin-right:-0.5px;-webkit-text-stroke-width:0.26px">点时</span></span></span></div>
<div style="left:114px;top:524px;width:58px;height:14px;display:flex;align-items:center;justify-content:center;text-align:center;color:#111;font:10px/12px Liberation Serif,serif;padding-top:3px;box-sizing:border-box;"><span class="in"><span class="ln">F<sub>1</sub></span></span></div>
<div style="left:173px;top:524px;width:38px;height:14px;display:flex;align-items:center;justify-content:center;text-align:center;color:#111;font:10px/12px Liberation Serif,serif;padding-top:3px;box-sizing:border-box;"><span class="in"><span class="ln">=</span></span></div>
<div style="left:212px;top:524px;width:46px;height:14px;display:flex;align-items:center;justify-content:center;text-align:center;color:#111;font:10px/12px Liberation Serif,serif;padding-top:3px;box-sizing:border-box;"><span class="in"><span class="ln">W</span></span></div>
<div style="left:259px;top:524px;width:41px;height:14px;display:flex;align-items:center;justify-content:center;text-align:center;color:#111;font:10px/12px Liberation Serif,serif;padding-top:3px;box-sizing:border-box;"><span class="in"><span class="ln"><span class="x">×</span></span></span></div>
<div style="left:301px;top:524px;width:53px;height:14px;display:flex;align-items:center;justify-content:center;text-align:center;color:#111;font:10px/12px Liberation Serif,serif;padding-top:3px;box-sizing:border-box;"><span class="in"><span class="ln">L</span></span></div>
<div style="left:355px;top:524px;width:43px;height:14px;display:flex;align-items:center;justify-content:center;text-align:center;color:#111;font:10px/12px Liberation Serif,serif;padding-top:3px;box-sizing:border-box;"><span class="in"><span class="ln"><span class="x">×</span></span></span></div>
<div style="left:399px;top:524px;width:54px;height:14px;display:flex;align-items:center;justify-content:center;text-align:center;color:#111;font:10px/12px Liberation Serif,serif;padding-top:3px;box-sizing:border-box;"><span class="in"><span class="ln">f</span></span></div>
<div style="left:454px;top:524px;width:53px;height:14px;display:flex;align-items:center;justify-content:center;text-align:center;color:#111;font:10px/12px Liberation Serif,serif;padding-top:3px;box-sizing:border-box;"><span class="in"><span class="ln">=</span></span></div>
<div style="left:508px;top:524px;width:187px;height:14px;display:flex;align-items:center;justify-content:center;text-align:center;color:#111;font:10px/12px Liberation Serif,serif;padding-top:3px;box-sizing:border-box;"><span class="in"><span class="ln">6<span class="p">.</span>77</span></span></div>
<div style="left:696px;top:524px;width:50px;height:14px;display:flex;align-items:center;justify-content:center;text-align:center;color:#111;font:10px/12px Liberation Serif,serif;padding-top:3px;box-sizing:border-box;"><span class="in"><span class="ln">(T)</span></span></div>
<div style="left:17px;top:539px;width:729px;height:14px;display:flex;align-items:center;justify-content:flex-start;text-align:left;color:#111;font:10px/12px Liberation Serif,serif;padding-left:2px;box-sizing:border-box;padding-top:3px;box-sizing:border-box;"><span class="in"><span class="ln">2)<span class="k" style="font-size:12px;letter-spacing:1px;padding-left:0.5px;margin-right:-0.5px;-webkit-text-stroke-width:0.26px">在第</span>2<span class="k" style="font-size:12px;letter-spacing:1px;padding-left:0.5px;margin-right:-0.5px;-webkit-text-stroke-width:0.26px">点，也就是管线回拖到第一个转折点，其计算如下：</span></span></span></div>
<div style="left:17px;top:554px;width:57px;height:15px;display:flex;align-items:center;justify-content:center;text-align:center;color:#111;font:10px/12px Liberation Serif,serif;padding-top:3px;box-sizing:border-box;"><span class="in"><span class="ln">F<sub>2-1</sub></span></span></div>
<div style="left:75px;top:554px;width:38px;height:15px;display:flex;align-items:center;justify-content:center;text-align:center;color:#111;font:10px/12px Liberation Serif,serif;padding-top:3px;box-sizing:border-box;"><span class="in"><span class="ln">=</span></span></div>
<div style="left:114px;top:554px;width:58px;height:15px;display:flex;align-items:center;justify-content:center;text-align:center;color:#111;font:10px/12px Liberation Serif,serif;padding-top:3px;box-sizing:border-box;"><span class="in"><span class="ln"><span class="k" style="font-size:12px;letter-spacing:1px;padding-left:0.5px;margin-right:-0.5px;-webkit-text-stroke-width:0.26px">（</span>W-F<span class="k" style="font-size:12px;letter-spacing:1px;padding-left:0.5px;margin-right:-0.5px;-webkit-text-stroke-width:0.26px">浮）</span></span></span></div>
<div style="left:173px;top:554px;width:38px;height:15px;display:flex;align-items:center;justify-content:center;text-align:center;color:#111;font:10px/12px Liberation Serif,serif;padding-top:3px;box-sizing:border-box;"><span class="in"><span class="ln"><span class="x">×</span></span></span></div>
<div style="left:212px;top:554px;width:46px;height:15px;display:flex;align-items:center;justify-content:center;text-align:center;color:#111;font:10px/12px Liberation Serif,serif;padding-top:3px;box-sizing:border-box;"><span class="in"><span class="ln">L<sub>1</sub></span></span></div>
<div style="left:259px;top:554px;width:41px;height:15px;display:flex;align-items:center;justify-content:center;text-align:center;color:#111;font:10px/12px Liberation Serif,serif;padding-top:3px;box-sizing:border-box;"><span class="in"><span class="ln"><span class="x">×</span></span></span></div>
<div style="left:399px;top:554px;width:54px;height:15px;display:flex;align-items:center;justify-content:center;text-align:center;color:#111;font:10px/12px Liberation Serif,serif;padding-top:3px;box-sizing:border-box;"><span class="in"><span class="ln">=</span></span></div>
<div style="left:301px;top:554px;width:97px;height:15px;display:flex;align-items:center;justify-content:center;text-align:center;color:#111;font:10px/12px Liberation Serif,serif;padding-top:3px;box-sizing:border-box;"><span class="in"><span class="ln"><span class="k" style="font-size:12px;letter-spacing:1px;padding-left:0.5px;margin-right:-0.5px;-webkit-text-stroke-width:0.26px">（</span>f<sub>1</sub>cosβ+sinβ<span class="k" style="font-size:12px;letter-spacing:1px;padding-left:0.5px;margin-right:-0.5px;-webkit-text-stroke-width:0.26px">）</span></span></span></div>
<div style="left:454px;top:554px;width:241px;height:15px;display:flex;align-items:center;justify-content:center;text-align:center;color:#111;font:10px/12px Liberation Serif,serif;padding-top:3px;box-sizing:border-box;"><span class="in"><span class="ln">2<span class="p">.</span>18</span></span></div>
<div style="left:696px;top:554px;width:50px;height:15px;display:flex;align-items:center;justify-content:center;text-align:center;color:#111;font:10px/12px Liberation Serif,serif;padding-top:3px;box-sizing:border-box;"><span class="in"><span class="ln">(T)</span></span></div>
<div style="left:17px;top:205px;width:730px;height:1px;background:#000;"></div>
<div style="left:17px;top:251px;width:730px;height:1px;background:#000;"></div>
<div style="left:17px;top:322px;width:730px;height:1px;background:#000;"></div>
<div style="left:74px;top:206px;width:1px;height:117px;background:#000;"></div>
<div style="left:113px;top:206px;width:1px;height:117px;background:#000;"></div>
<div style="left:172px;top:206px;width:1px;height:117px;background:#000;"></div>
<div style="left:211px;top:206px;width:1px;height:117px;background:#000;"></div>
<div style="left:258px;top:206px;width:1px;height:117px;background:#000;"></div>
<div style="left:300px;top:206px;width:1px;height:117px;background:#000;"></div>
<div style="left:354px;top:206px;width:1px;height:117px;background:#000;"></div>
<div style="left:398px;top:206px;width:1px;height:117px;background:#000;"></div>
<div style="left:453px;top:206px;width:1px;height:117px;background:#000;"></div>
<div style="left:507px;top:206px;width:1px;height:117px;background:#000;"></div>
<div style="left:576px;top:206px;width:1px;height:117px;background:#000;"></div>
<div style="left:625px;top:206px;width:1px;height:117px;background:#000;"></div>
<div style="left:695px;top:206px;width:1px;height:117px;background:#000;"></div>
<div style="left:746px;top:206px;width:1px;height:117px;background:#000;"></div>
<div style="left:17px;top:356px;width:730px;height:1px;background:#000;"></div>
<div style="left:625px;top:323px;width:1px;height:33px;background:#000;"></div>
<div style="left:695px;top:323px;width:1px;height:33px;background:#000;"></div>
<div style="left:17px;top:396px;width:730px;height:1px;background:#000;"></div>
<div style="left:17px;top:491px;width:730px;height:1px;background:#000;"></div>
<div style="left:172px;top:492px;width:1px;height:30px;background:#000;"></div>
<div style="left:354px;top:492px;width:1px;height:30px;background:#000;"></div>
<div style="left:576px;top:492px;width:1px;height:30px;background:#000;"></div>
<div style="left:746px;top:492px;width:1px;height:30px;background:#000;"></div>
<div style="left:17px;top:522px;width:730px;height:2px;background:#000;"></div>
<div style="left:113px;top:524px;width:1px;height:13px;background:#000;"></div>
<div style="left:172px;top:524px;width:1px;height:13px;background:#000;"></div>
<div style="left:211px;top:524px;width:1px;height:13px;background:#000;"></div>
<div style="left:258px;top:524px;width:1px;height:13px;background:#000;"></div>
<div style="left:300px;top:524px;width:1px;height:13px;background:#000;"></div>
<div style="left:354px;top:524px;width:1px;height:13px;background:#000;"></div>
<div style="left:398px;top:524px;width:1px;height:13px;background:#000;"></div>
<div style="left:453px;top:524px;width:1px;height:13px;background:#000;"></div>
<div style="left:507px;top:524px;width:1px;height:13px;background:#000;"></div>
<div style="left:695px;top:524px;width:1px;height:13px;background:#000;"></div>
<div style="left:745px;top:524px;width:2px;height:43px;background:#000;"></div>
<div style="left:17px;top:537px;width:730px;height:2px;background:#000;"></div>
<div style="left:17px;top:553px;width:730px;height:1px;background:#000;"></div>
<div style="left:74px;top:554px;width:1px;height:13px;background:#000;"></div>
<div style="left:113px;top:554px;width:1px;height:13px;background:#000;"></div>
<div style="left:172px;top:554px;width:1px;height:13px;background:#000;"></div>
<div style="left:211px;top:554px;width:1px;height:13px;background:#000;"></div>
<div style="left:258px;top:554px;width:1px;height:13px;background:#000;"></div>
<div style="left:300px;top:554px;width:1px;height:13px;background:#000;"></div>
<div style="left:398px;top:554px;width:1px;height:13px;background:#000;"></div>
<div style="left:453px;top:554px;width:1px;height:13px;background:#000;"></div>
<div style="left:695px;top:554px;width:1px;height:13px;background:#000;"></div>
<div style="left:16px;top:170px;width:1px;height:396px;background:#ababab;"></div>
<div style="left:746px;top:184px;width:1px;height:21px;background:#d9d9d9;"></div>
<div style="left:746px;top:357px;width:1px;height:134px;background:#d9d9d9;"></div>
<div style="left:694px;top:250px;width:54px;height:74px;border:2px solid #217346;box-sizing:border-box;box-shadow:inset 0 0 0 1px #fff;"></div>
<div style="left:743px;top:319px;width:7px;height:7px;background:#217346;border:1px solid #fff;box-sizing:border-box;"></div>
<svg style="position:absolute;left:17px;top:397px" width="729" height="94" viewBox="17 397 729 94">
<g fill="none" stroke="#4a7fc8" stroke-width="1.2">
<path d="M34.5 414.2 L200 413.2 L737 413.3"/>
<path d="M33 404 L100 441 C135 460.4 160 466.3 200 466.5 L520 468.2"/>
<path d="M523 467.6 C590 466 625 460 640 444 L736 403.6"/>
<path d="M345.5 413 V467"/>
<path d="M341.5 419 L345.5 413 L349.5 419 M341.5 461 L345.5 467 L349.5 461"/>
</g>
<g fill="#fff" stroke="#ed7d31" stroke-width="2.2">
<ellipse cx="92.5" cy="410.4" rx="31.9" ry="9.8"/>
<ellipse cx="49.8" cy="436.8" rx="32.4" ry="10.2"/>
<ellipse cx="188.3" cy="453.1" rx="30.9" ry="8"/>
<ellipse cx="300.8" cy="442.5" rx="32.5" ry="9.5"/>
<ellipse cx="502.6" cy="452.8" rx="34.5" ry="9.2"/>
<ellipse cx="652.6" cy="411.7" rx="25.9" ry="7.2"/>
<ellipse cx="701" cy="444.3" rx="33.5" ry="10.6"/>
</g>
</svg>
<div style="left:52.5px;top:404.4px;width:80px;height:16px;color:#000;font:11px/16px Liberation Sans,sans-serif;text-align:center;"><span class="k" style="font-size:13px;letter-spacing:1px;padding-left:0.5px;margin-right:-0.5px;-webkit-text-stroke-width:0.29px">出土点</span></div>
<div style="left:9.799999999999997px;top:430.5px;width:80px;height:16px;color:#000;font:11px/16px Liberation Sans,sans-serif;text-align:center;">4#<span class="k" style="font-size:13px;letter-spacing:1px;padding-left:0.5px;margin-right:-0.5px;-webkit-text-stroke-width:0.29px">点</span></div>
<div style="left:148.3px;top:446.8px;width:80px;height:16px;color:#000;font:10px/16px Liberation Sans,sans-serif;text-align:center;">3#<span class="k" style="font-size:12px;letter-spacing:1px;padding-left:0.5px;margin-right:-0.5px;-webkit-text-stroke-width:0.26px">点</span></div>
<div style="left:260.8px;top:436.2px;width:80px;height:16px;color:#000;font:11px/16px Liberation Sans,sans-serif;text-align:center;"><span class="k" style="font-size:13px;letter-spacing:1px;padding-left:0.5px;margin-right:-0.5px;-webkit-text-stroke-width:0.29px">埋深</span></div>
<div style="left:462.6px;top:446.5px;width:80px;height:16px;color:#000;font:11px/16px Liberation Sans,sans-serif;text-align:center;">2#<span class="k" style="font-size:13px;letter-spacing:1px;padding-left:0.5px;margin-right:-0.5px;-webkit-text-stroke-width:0.29px">点</span></div>
<div style="left:615.6px;top:405.4px;width:80px;height:16px;color:#000;font:10px/16px Liberation Sans,sans-serif;text-align:center;"><span class="k" style="font-size:12px;letter-spacing:1px;padding-left:0.5px;margin-right:-0.5px;-webkit-text-stroke-width:0.26px">入土点</span></div>
<div style="left:661px;top:438.3px;width:80px;height:16px;color:#000;font:11px/16px Liberation Sans,sans-serif;text-align:center;">1#<span class="k" style="font-size:13px;letter-spacing:1px;padding-left:0.5px;margin-right:-0.5px;-webkit-text-stroke-width:0.29px">点</span></div>
<div style="left:5px;top:566px;width:791px;height:30px;background:#e6e6e6;"></div>
<div style="left:5px;top:566px;width:791px;height:1px;background:#ababab;"></div>
<div style="left:5px;top:595px;width:791px;height:1px;background:#c8c8c8;"></div>
<svg style="position:absolute;left:20px;top:576px" width="40" height="10"><path d="M6 0v9L1 4.5z" fill="#bdbdbd"/><path d="M31 0v9l5-4.5z" fill="#bdbdbd"/></svg>
<div style="left:97px;top:566px;width:83px;height:25px;background:#fff;border-left:1px solid #c6c6c6;border-right:1px solid #c6c6c6;box-sizing:border-box;"></div>
<div style="left:97px;top:589px;width:83px;height:2px;background:#217346;"></div>
<div style="left:110px;top:567px;width:70px;height:20px;color:#217346;font:17.5px/20px Liberation Sans,sans-serif;">Sheet1</div>
<div style="left:192px;top:567px;width:70px;height:20px;color:#444;font:17.5px/20px Liberation Sans,sans-serif;">Sheet2</div>
<div style="left:260px;top:571px;width:1px;height:19px;background:#9a9a9a;"></div>
<div style="left:273px;top:567px;width:70px;height:20px;color:#444;font:17.5px/20px Liberation Sans,sans-serif;">Sheet3</div>
<div style="left:342px;top:571px;width:1px;height:19px;background:#9a9a9a;"></div>
<svg style="position:absolute;left:375px;top:572px" width="22" height="22"><circle cx="10.5" cy="10.5" r="9.3" stroke="#666" stroke-width="1.4" fill="none"/><path d="M10.5 5.5v10M5.5 10.5h10" stroke="#666" stroke-width="1.6"/></svg>
<div style="left:519px;top:574px;width:3px;height:3px;background:#a8a8a8;"></div>
<div style="left:519px;top:579px;width:3px;height:3px;background:#a8a8a8;"></div>
<div style="left:519px;top:584px;width:3px;height:3px;background:#a8a8a8;"></div>
<div style="left:537px;top:571px;width:259px;height:19px;background:#fff;border:1px solid #777;border-right:none;box-sizing:border-box;"></div>
<div style="left:555px;top:571px;width:1px;height:19px;background:#777;"></div>
<svg style="position:absolute;left:542px;top:576px" width="7" height="10"><path d="M6 0v9L1 4.5z" fill="#555"/></svg>
<div style="left:656px;top:561px;width:250px;height:36px;color:#9a9a9a;font:30px/36px Liberation Serif,serif;white-space:pre;transform:scaleX(0.597);transform-origin:0 0;">www. cndao. com</div>

<script>(function(){var s=document.createElement('span');s.style.cssText='position:absolute;left:-999px;top:0;font:100px Liberation Sans;white-space:nowrap';s.textContent='定定';document.body.appendChild(s);var w=s.getBoundingClientRect().width;document.body.removeChild(s);if(w>170)document.body.className='cjk';})();</script>
</body></html>
